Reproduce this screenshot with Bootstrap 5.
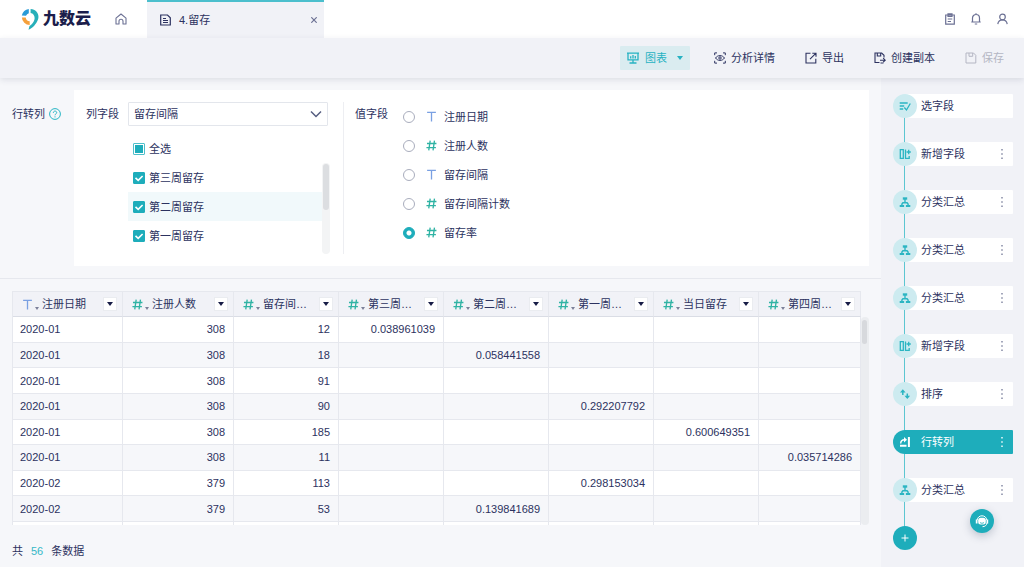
<!DOCTYPE html>
<html lang="zh-CN">
<head>
<meta charset="utf-8">
<meta name="viewport" content="width=device-width, initial-scale=1">
<title>4.留存 - 九数云</title>
<link rel="stylesheet" href="https://cdn.jsdelivr.net/npm/bootstrap@5.3.0/dist/css/bootstrap.min.css">
<style>
  :root { --teal:#1eadbb; --ink:#2c3260; --line:#e6e8ee; --main:#f6f7fa; --side:#f1f2f7; }
  body { font:11px/16px "Liberation Sans","Noto Sans CJK SC",sans-serif; color:var(--ink); background:var(--main); }
  svg { fill:none; stroke:currentColor; flex:none; display:block; }
  button { font:inherit; color:inherit; }
  .app-head { height:38px; }
  .brand { width:147px; padding:0 20px 0 21px; }
  .brand-name { font-size:16px; font-weight:900; line-height:20px; color:#1b1d4b; }
  .home-link, .head-icons { color:#6c7194; }
  .head-icons { padding-right:16px; }
  .page-tab { width:177px; padding:0 7px 0 13px; background:var(--side); border-top:2px solid #4bbfcd; color:var(--ink); }
  .icon-btn { border:0; background:none; padding:0; }
  .tool-row { height:40px; background:var(--side); box-shadow:0 2px 6px rgba(40,50,80,.12); z-index:2; gap:18px; padding-right:14px; }
  .tool-btn { height:24px; border:0; border-radius:1px; background:none; padding:0 6px; gap:5px; display:flex; align-items:center; }
  .tool-btn.chart { background:#daecf0; color:#27b2c2; padding:0 7px; gap:6px; }
  .tool-btn:disabled { color:#b4b6c3; }
  .caret { width:0; height:0; border:3px solid transparent; border-top:4px solid currentColor; border-bottom:0; }
  .pivot { padding:12px; border-bottom:1px solid var(--line); }
  .pivot-name { width:62px; height:24px; margin-top:12px; gap:4px; color:#28b5c4; }
  .pivot-name span { color:var(--ink); }
  .pivot-card { padding:12px; height:176px; }
  .pick-col { width:202px; }
  .field-label { height:24px; line-height:24px; width:42px; }
  .value-col .field-label { width:48px; }
  .form-select { height:24px; width:200px; padding:0 24px 0 5px; font-size:11px; line-height:16px; color:var(--ink); border:1px solid #e3e6ec; border-radius:1px;
    background-image:url("data:image/svg+xml,%3Csvg xmlns='http://www.w3.org/2000/svg' viewBox='0 0 12 8' fill='none' stroke='%23555d80' stroke-width='1.5'%3E%3Cpath d='M1 1.5l5 5 5-5'/%3E%3C/svg%3E"); background-size:12px 8px; background-position:right 5px center; }
  .opt { height:29px; padding:0 5px; display:flex; align-items:center; gap:4px; }
  .opt.hot { background:#f1f9fb; }
  .form-check-input { margin:0; width:12px; height:12px; border-color:#a9adbd; flex:none; }
  .form-check-input[type=checkbox] { border-radius:1px; }
  .form-check-input:checked { border-color:var(--teal); background-color:var(--teal); }
  .form-check-input:checked[type=checkbox] { background-size:10px 10px; background-image:url("data:image/svg+xml,%3Csvg xmlns='http://www.w3.org/2000/svg' viewBox='0 0 10 10' fill='none' stroke='white' stroke-width='1.6'%3E%3Cpath d='M1.500 4.800L4.200 7.400 8.600 3'/%3E%3C/svg%3E"); }
  .form-check-input[type=checkbox]:indeterminate { border-color:#4fc0cb; background:linear-gradient(var(--teal),var(--teal)) center/8px 8px no-repeat #fff; }
  .form-check-input:checked[type=radio] { background-image:radial-gradient(circle,#fff 2px,transparent 3px); }
  .pick-list { height:91px; overflow:hidden; }
  .bar-track { width:8px; background:#f3f4f5; border-radius:4px; padding:1px; }
  .bar-thumb { height:46px; background:#dcdee1; border-radius:3px; }
  .value-col { border-left:1px solid #edeef2; margin-left:13px; padding-left:11px; }
  .val { height:29px; display:flex; align-items:center; }
  .val .type-mark { margin:0 7px 0 11px; }
  .type-mark { width:11px; height:11px; color:#2fb3a4; }
  .type-mark.txt { color:#7aa0e2; }
  .grid-area { padding:12px 12px 0; }
  .grid-clip { height:234px; overflow:hidden; }
  .data-grid { table-layout:fixed; width:100%; height:234px; border-collapse:separate; border-spacing:0; border-left:1px solid var(--line); border-top:1px solid var(--line); }
  .data-grid th { height:25px; background:var(--side); font-weight:400; border-bottom:1px solid #dadde5; border-right:1px solid var(--line); padding:0 5px 0 9px; }
  .data-grid td { padding:0 8px; text-align:right; border-right:1px solid var(--line); border-bottom:1px solid var(--line); }
  .data-grid td:first-child { text-align:left; padding-left:7px; }
  .data-grid tbody tr:nth-child(odd) { background:#fff; }
  .data-grid .tail td { height:3px; border-bottom:0; }
  .data-grid .w-first { width:110px; } .data-grid .w-a { width:111px; } .data-grid .w-b { width:105px; }
  .th-in { display:flex; align-items:center; }
  .th-in::before { content:""; order:1; margin:8px 3px 0 2px; border:2px solid transparent; border-top:3px solid #7c8099; border-bottom:0; }
  .th-in .name { order:2; flex:1; }
  .filter { order:3; width:14px; height:14px; border:1px solid #eaecf0; background:#fff; padding:0; display:flex; align-items:center; justify-content:center; color:#171c46; }
  .filter::after { content:""; border:3px solid transparent; border-top:4px solid; border-bottom:0; }
  .grid-bar { flex:none; width:8px; margin-top:26px; background:#ebedf0; border-radius:4px; padding:3px 2px 3px 1px; }
  .grid-bar .bar-thumb { height:24px; background:#d7d9dd; }
  .total { padding:18px 12px 0; }
  .total b { font-weight:400; color:#35b7c6; margin:0 8px; }
  .side { width:143px; background:var(--side); padding:16px 11px 0 12px; }
  .steps { gap:24px; }
  .steps::before { content:""; position:absolute; left:11px; top:12px; bottom:12px; width:1px; background:#5cc6d1; }
  .step { height:24px; border-radius:12px 1px 1px 12px; background:linear-gradient(90deg,transparent 12px,#fff 12px); }
  .step .mark-dot { width:24px; height:24px; border-radius:50%; background:#cdebf0; color:#2bb5c2; display:flex; align-items:center; justify-content:center; margin-right:4px; }
  .step a { color:inherit; flex:1; text-decoration:none; }
  .step .icon-btn { width:22px; color:#7d829e; display:flex; justify-content:center; }
  .step.on { background:var(--teal); color:#fff; }
  .step.on .mark-dot { background:none; color:#fff; } .step.on .icon-btn { color:#fff; }
  .round { width:24px; height:24px; border:0; border-radius:50%; background:var(--teal); color:#fff; display:flex; align-items:center; justify-content:center; padding:0; }
  .help { position:fixed; right:30px; bottom:34px; box-shadow:0 3px 8px rgba(40,60,90,.25); }
</style>
</head>
<body class="d-flex flex-column min-vh-100">
<svg width="0" height="0" class="position-absolute" aria-hidden="true">
  <symbol id="i-hash" viewBox="0 0 10 10"><path d="M3.800.5L2.500 9.500M7.700.5L6.400 9.500M.9 3.200h8.600M.4 6.900h8.600" stroke-width="1.200"/></symbol>
  <symbol id="i-t" viewBox="0 0 10 10"><path d="M1 1.200h8M5 1.200v8.400" stroke-width="1.200"/></symbol>
  <symbol id="i-sum" viewBox="0 0 12 12"><path d="M3.800 2.500h4.400" stroke-width="2.400"/><path d="M6 3v3.500M2.900 9.500V8l1-1.300h4.200l1 1.300v1.500" stroke-width="1.400"/><path d="M.7 9.900h4.400M6.900 9.900h4.400" stroke-width="2"/></symbol>
  <symbol id="i-add" viewBox="0 0 12 12"><path d="M1.300 1.700h3v8.600h-3zM6.500 1.500v8.800h3.700V8M7.600 4h4.200M9.700 1.800v4.400" stroke-width="1.300"/></symbol>
  <symbol id="i-dots" viewBox="0 0 4 12"><path d="M2 1v1.400M2 5.300v1.400M2 9.600V11" stroke-width="1.400"/></symbol>
</svg>

<header class="app-head d-flex bg-white">
  <div class="brand d-flex align-items-center">
    <svg width="18" height="23" viewBox="0 0 18 23"><g stroke="none"><path d="M.8 7.400A8.500 8.500 0 0 1 7.800 1v4.200A4.500 4.500 0 0 0 5 7.800z" fill="#2a9ad6"/><path d="M.9 9.400h3.800a4.500 4.500 0 0 0 4 3.900v3.800A8 8 0 0 1 .9 9.400z" fill="#f5a03c"/><path d="M9.600.9c6.300.3 9.300 6 7.200 11.200-1.600 4-4.800 8-9.300 9.600l1-3.800c2.500-1.400 4-3.700 4.800-6 1-3.200-.4-6.400-3.700-6.900z" fill="#27afb9"/></g></svg>
    <span class="brand-name ms-1">九数云</span>
    <a href="#" class="home-link ms-auto" aria-label="首页"><svg width="12" height="12" viewBox="0 0 12 12"><path d="M1 5.200L6 1l5 4.200V11H8V8.200a2 2 0 0 0-4 0V11H1z" stroke-width="1.100" stroke-linejoin="round"/></svg></a>
  </div>
  <div class="page-tab d-flex align-items-center">
    <svg class="me-2" width="11" height="12" viewBox="0 0 11 12"><path d="M.7 1h6.800l2.800 2.800V11H.7zM3 4.500h3M3 6.500h5M3 8.500h5" stroke-width="1.200"/></svg>
    <a href="#" class="text-reset text-decoration-none">4.留存</a>
    <button class="icon-btn ms-auto" aria-label="关闭"><svg width="6" height="6" viewBox="0 0 6 6"><path d="M.3.3l5.400 5.400M5.700.3L.3 5.700" stroke="#6c7194" stroke-width="1.200"/></svg></button>
  </div>
  <div class="head-icons ms-auto d-flex align-items-center gap-3">
    <button class="icon-btn" aria-label="任务"><svg width="10" height="12" viewBox="0 0 10 12"><path d="M.7 2h8.600v9.200H.7zM3 3.300h4V.8H3zM2.700 6h4.600M2.700 8.500h3.300" stroke-width="1.200"/></svg></button>
    <button class="icon-btn" aria-label="通知"><svg width="10" height="12" viewBox="0 0 10 12"><path d="M.3 9h9.400M1.500 9V5a3.500 3.500 0 0 1 7 0v4M5 .3v1M3.800 11h2.400" stroke-width="1.200"/></svg></button>
    <button class="icon-btn" aria-label="我的"><svg width="11" height="12" viewBox="0 0 11 12"><circle cx="5.500" cy="4" r="2.800" stroke-width="1.200"/><path d="M.8 11.200c.4-3 2-4.300 4.700-4.300s4.300 1.300 4.700 4.300" stroke-width="1.200"/></svg></button>
  </div>
</header>

<div class="tool-row position-relative d-flex justify-content-end align-items-center">
  <button class="tool-btn chart"><svg width="12" height="12" viewBox="0 0 12 12"><path d="M0 1.200h12M1 1.200v6.600h10V1.200M6 8v2.500M2.500 11h7M3.700 6.500V4.300M6 6.500V3M8.300 6.500V4" stroke-width="1.300"/></svg>图表<span class="caret ms-1"></span></button>
  <button class="tool-btn"><svg width="12" height="12" viewBox="0 0 12 12"><path d="M.7 3.200V.9H3M9 .9h2.300v2.300M11.300 8.800v2.300H9M3 11.100H.7V8.800M1.500 6c2.200-3.200 6.800-3.200 9 0-2.200 3.200-6.800 3.200-9 0z"/><circle cx="6" cy="6" r="1.200"/></svg>分析详情</button>
  <button class="tool-btn"><svg width="12" height="12" viewBox="0 0 12 12"><path d="M5.500 1.200H1v9.800h9.800V6.800M7.300 1.200h3.700v3.600M10.800 1.400L5 7.200" stroke-width="1.100"/></svg>导出</button>
  <button class="tool-btn"><svg width="12" height="12" viewBox="0 0 12 12"><path d="M5.500 10.500H1V1h6.700l2.300 2.300v2.200M3.300 1v3h3.400V1M6 8.200h5M9.200 6.200l2 2-2 2M6.500 11h3" stroke-width="1.100"/></svg>创建副本</button>
  <button class="tool-btn" disabled><svg width="12" height="12" viewBox="0 0 12 12"><path d="M1 1h7.500l2.300 2.300V11H1zM4 1v3.300h3.700V1"/></svg>保存</button>
</div>

<div class="d-flex flex-grow-1">
  <main class="flex-grow-1 overflow-hidden">
    <section class="pivot d-flex">
      <div class="pivot-name d-flex align-items-center"><span>行转列</span><svg width="12" height="12" viewBox="0 0 12 12"><circle cx="6" cy="6" r="5.400"/><path d="M4.300 4.800c0-2.300 3.500-2.200 3.400-.1C7.700 5.900 6 5.800 6 7.300M6 8.300v1.100"/></svg></div>
      <div class="pivot-card d-flex bg-white flex-grow-1">
        <label class="field-label" for="colField">列字段</label>
        <div class="pick-col">
          <select id="colField" class="form-select"><option>留存间隔</option></select>
          <label class="opt mt-2"><input id="pickAll" class="form-check-input" type="checkbox">全选</label>
          <div class="d-flex">
            <div class="pick-list flex-grow-1">
              <label class="opt"><input class="form-check-input" type="checkbox" checked>第三周留存</label>
              <label class="opt hot"><input class="form-check-input" type="checkbox" checked>第二周留存</label>
              <label class="opt"><input class="form-check-input" type="checkbox" checked>第一周留存</label>
            </div>
            <div class="bar-track"><div class="bar-thumb"></div></div>
          </div>
        </div>
        <div class="value-col d-flex">
          <span class="field-label">值字段</span>
          <div>
            <label class="val"><input class="form-check-input" type="radio" name="val"><svg class="type-mark txt"><use href="#i-t"/></svg>注册日期</label>
            <label class="val"><input class="form-check-input" type="radio" name="val"><svg class="type-mark"><use href="#i-hash"/></svg>注册人数</label>
            <label class="val"><input class="form-check-input" type="radio" name="val"><svg class="type-mark txt"><use href="#i-t"/></svg>留存间隔</label>
            <label class="val"><input class="form-check-input" type="radio" name="val"><svg class="type-mark"><use href="#i-hash"/></svg>留存间隔计数</label>
            <label class="val"><input class="form-check-input" type="radio" name="val" checked><svg class="type-mark"><use href="#i-hash"/></svg>留存率</label>
          </div>
        </div>
      </div>
    </section>
    <section class="grid-area">
      <div class="d-flex">
        <div class="grid-clip flex-grow-1">
          <table class="data-grid">
            <thead><tr>
              <th class="w-first"><div class="th-in"><svg class="type-mark txt"><use href="#i-t"/></svg><span class="name">注册日期</span><button class="filter" aria-label="筛选"></button></div></th>
              <th class="w-a"><div class="th-in"><svg class="type-mark"><use href="#i-hash"/></svg><span class="name">注册人数</span><button class="filter" aria-label="筛选"></button></div></th>
              <th class="w-b"><div class="th-in"><svg class="type-mark"><use href="#i-hash"/></svg><span class="name">留存间…</span><button class="filter" aria-label="筛选"></button></div></th>
              <th class="w-b"><div class="th-in"><svg class="type-mark"><use href="#i-hash"/></svg><span class="name">第三周…</span><button class="filter" aria-label="筛选"></button></div></th>
              <th class="w-b"><div class="th-in"><svg class="type-mark"><use href="#i-hash"/></svg><span class="name">第二周…</span><button class="filter" aria-label="筛选"></button></div></th>
              <th class="w-b"><div class="th-in"><svg class="type-mark"><use href="#i-hash"/></svg><span class="name">第一周…</span><button class="filter" aria-label="筛选"></button></div></th>
              <th class="w-b"><div class="th-in"><svg class="type-mark"><use href="#i-hash"/></svg><span class="name">当日留存</span><button class="filter" aria-label="筛选"></button></div></th>
              <th><div class="th-in"><svg class="type-mark"><use href="#i-hash"/></svg><span class="name">第四周…</span><button class="filter" aria-label="筛选"></button></div></th>
            </tr></thead>
            <tbody>
              <tr><td>2020-01</td><td>308</td><td>12</td><td>0.038961039</td><td></td><td></td><td></td><td></td></tr>
              <tr><td>2020-01</td><td>308</td><td>18</td><td></td><td>0.058441558</td><td></td><td></td><td></td></tr>
              <tr><td>2020-01</td><td>308</td><td>91</td><td></td><td></td><td></td><td></td><td></td></tr>
              <tr><td>2020-01</td><td>308</td><td>90</td><td></td><td></td><td>0.292207792</td><td></td><td></td></tr>
              <tr><td>2020-01</td><td>308</td><td>185</td><td></td><td></td><td></td><td>0.600649351</td><td></td></tr>
              <tr><td>2020-01</td><td>308</td><td>11</td><td></td><td></td><td></td><td></td><td>0.035714286</td></tr>
              <tr><td>2020-02</td><td>379</td><td>113</td><td></td><td></td><td>0.298153034</td><td></td><td></td></tr>
              <tr><td>2020-02</td><td>379</td><td>53</td><td></td><td>0.139841689</td><td></td><td></td><td></td></tr>
              <tr class="tail"><td></td><td></td><td></td><td></td><td></td><td></td><td></td><td></td></tr>
            </tbody>
          </table>
        </div>
        <div class="grid-bar"><div class="bar-thumb"></div></div>
      </div>
    </section>
    <div class="total">共<b>56</b>条数据</div>
  </main>

  <aside class="side flex-shrink-0">
    <div class="steps position-relative d-flex flex-column">
      <div class="step position-relative d-flex align-items-center"><span class="mark-dot"><svg width="12" height="12" viewBox="0 0 12 12"><path d="M.7 3h8M.7 6h4.500M.7 9h3.500M5.300 7.500L7.500 10l3.800-6.500" stroke-width="1.300"/></svg></span><a href="#">选字段</a></div>
      <div class="step position-relative d-flex align-items-center"><span class="mark-dot"><svg width="12" height="12"><use href="#i-add"/></svg></span><a href="#">新增字段</a><button class="icon-btn" aria-label="更多"><svg width="4" height="12"><use href="#i-dots"/></svg></button></div>
      <div class="step position-relative d-flex align-items-center"><span class="mark-dot"><svg width="12" height="12"><use href="#i-sum"/></svg></span><a href="#">分类汇总</a><button class="icon-btn" aria-label="更多"><svg width="4" height="12"><use href="#i-dots"/></svg></button></div>
      <div class="step position-relative d-flex align-items-center"><span class="mark-dot"><svg width="12" height="12"><use href="#i-sum"/></svg></span><a href="#">分类汇总</a><button class="icon-btn" aria-label="更多"><svg width="4" height="12"><use href="#i-dots"/></svg></button></div>
      <div class="step position-relative d-flex align-items-center"><span class="mark-dot"><svg width="12" height="12"><use href="#i-sum"/></svg></span><a href="#">分类汇总</a><button class="icon-btn" aria-label="更多"><svg width="4" height="12"><use href="#i-dots"/></svg></button></div>
      <div class="step position-relative d-flex align-items-center"><span class="mark-dot"><svg width="12" height="12"><use href="#i-add"/></svg></span><a href="#">新增字段</a><button class="icon-btn" aria-label="更多"><svg width="4" height="12"><use href="#i-dots"/></svg></button></div>
      <div class="step position-relative d-flex align-items-center"><span class="mark-dot"><svg width="12" height="12" viewBox="0 0 12 12"><path d="M3.800 3v4M8.300 5.500v4" stroke-width="1.500"/><path d="M1 4.500L3.800 1.300l2.800 3.200zM5.500 7.800L8.300 11l2.800-3.200z" fill="currentColor" stroke="none"/></svg></span><a href="#">排序</a><button class="icon-btn" aria-label="更多"><svg width="4" height="12"><use href="#i-dots"/></svg></button></div>
      <div class="step on position-relative d-flex align-items-center"><span class="mark-dot"><svg width="12" height="12" viewBox="0 0 12 12"><path d="M9.900 1v10M1 9.800h6.500" stroke-width="2"/><path d="M1.700 7.500c0-2.600 1.300-3.800 4-3.800" stroke-width="1.400"/><path d="M5 1l3 2.700-3 2.700z" fill="currentColor" stroke="none"/></svg></span><a href="#">行转列</a><button class="icon-btn" aria-label="更多"><svg width="4" height="12"><use href="#i-dots"/></svg></button></div>
      <div class="step position-relative d-flex align-items-center"><span class="mark-dot"><svg width="12" height="12"><use href="#i-sum"/></svg></span><a href="#">分类汇总</a><button class="icon-btn" aria-label="更多"><svg width="4" height="12"><use href="#i-dots"/></svg></button></div>
      <button class="round position-relative" aria-label="添加"><svg width="8" height="8" viewBox="0 0 8 8"><path d="M4 .5v7M.5 4h7"/></svg></button>
    </div>
  </aside>
</div>
<button class="round help" aria-label="客服"><svg width="14" height="13" viewBox="0 0 14 13"><path d="M2.200 5C2.800-.6 11.200-.6 11.800 5M12 8c-.4 2.300-2 3.700-4.500 3.700" stroke-width="1"/><path d="M.8 4.500h1.700v4H.8zM11.500 4.500h1.700v4h-1.700z" fill="currentColor" stroke="none"/><rect x="3.200" y="2.800" width="7.600" height="6.800" rx="2.500" fill="currentColor" stroke="none"/><path d="M5 7.500c1.200 1 2.800 1 4 0" stroke="#1eadbb" stroke-width=".8"/></svg></button>
<script src="https://cdn.jsdelivr.net/npm/bootstrap@5.3.0/dist/js/bootstrap.bundle.min.js"></script>
<script>document.getElementById('pickAll').indeterminate = true;</script>
</body>
</html>
